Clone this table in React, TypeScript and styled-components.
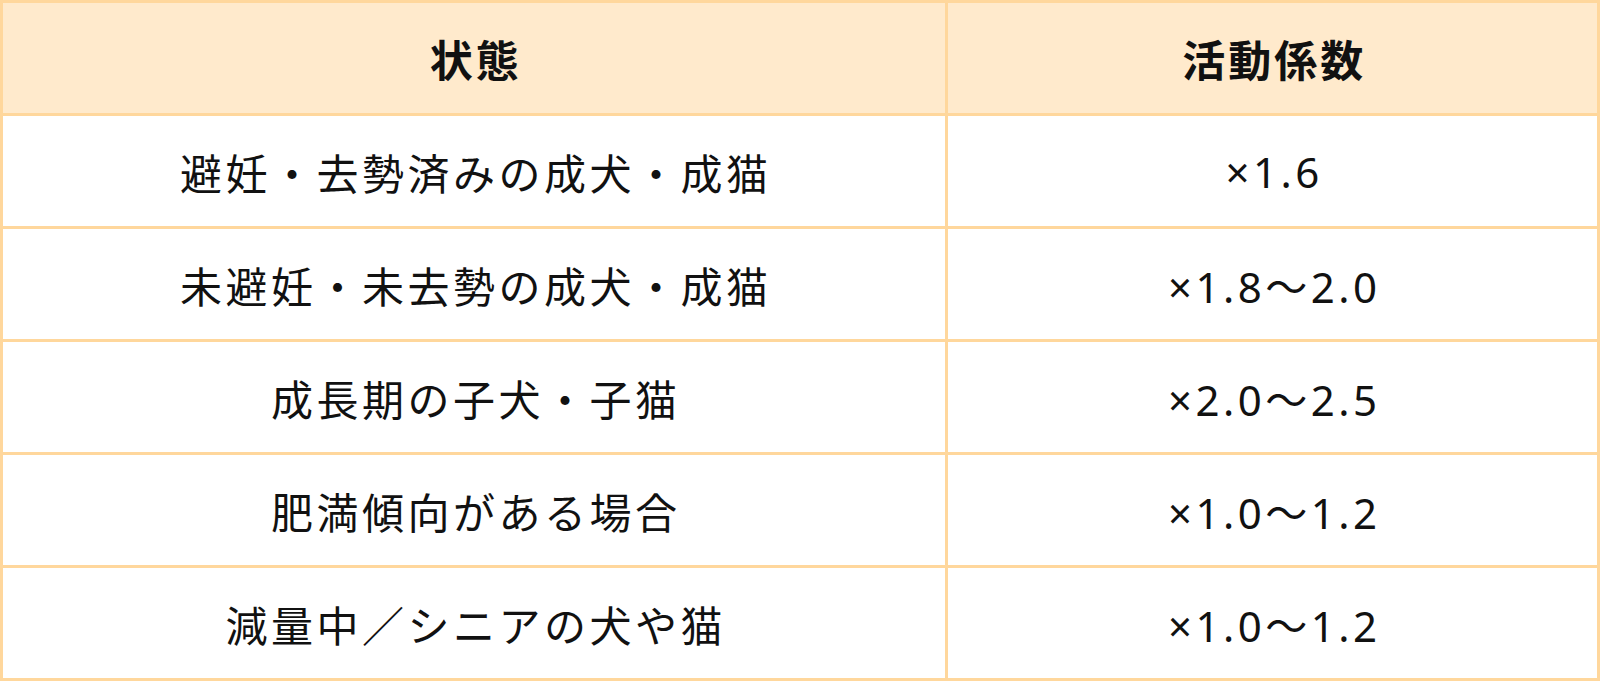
import React from "react";
import styled, { createGlobalStyle } from "styled-components";

const GlobalBody = createGlobalStyle`
  html, body {
    margin: 0;
    padding: 0;
    background: #ffffff;
  }
  body {
    font-family: "Noto Sans", "Noto Sans CJK JP", sans-serif;
    color: #111111;
  }
`;

const rows = [
  { state: "避妊・去勢済みの成犬・成猫", factor: "×1.6" },
  { state: "未避妊・未去勢の成犬・成猫", factor: "×1.8〜2.0" },
  { state: "成長期の子犬・子猫", factor: "×2.0〜2.5" },
  { state: "肥満傾向がある場合", factor: "×1.0〜1.2" },
  { state: "減量中／シニアの犬や猫", factor: "×1.0〜1.2" },
];

const App = () => {
  return (
    <>
      <GlobalBody />
      <Table>
        <colgroup>
          <col style={{ width: "59.2%" }} />
          <col />
        </colgroup>
        <thead>
          <tr>
            <HeadCell>状態</HeadCell>
            <HeadCell>活動係数</HeadCell>
          </tr>
        </thead>
        <tbody>
          {rows.map((r) => (
            <tr key={r.state}>
              <Cell>{r.state}</Cell>
              <Cell>{r.factor}</Cell>
            </tr>
          ))}
        </tbody>
      </Table>
    </>
  );
};

const Table = styled.table`
  width: 100%;
  border-collapse: collapse;
  table-layout: fixed;
  border: 3px solid #ffd79c;
`;

const HeadCell = styled.th`
  height: 110px;
  padding: 0 0 0 3px;
  background: #ffeacc;
  border: 3px solid #ffd79c;
  font-size: 43px;
  font-weight: 700;
  letter-spacing: 3px;
  text-align: center;
  vertical-align: middle;
`;

const Cell = styled.td`
  height: 110px;
  padding: 0 0 0 3px;
  border: 3px solid #ffd79c;
  font-size: 42px;
  font-weight: 400;
  letter-spacing: 3.5px;
  text-align: center;
  vertical-align: middle;
`;

export default App;
